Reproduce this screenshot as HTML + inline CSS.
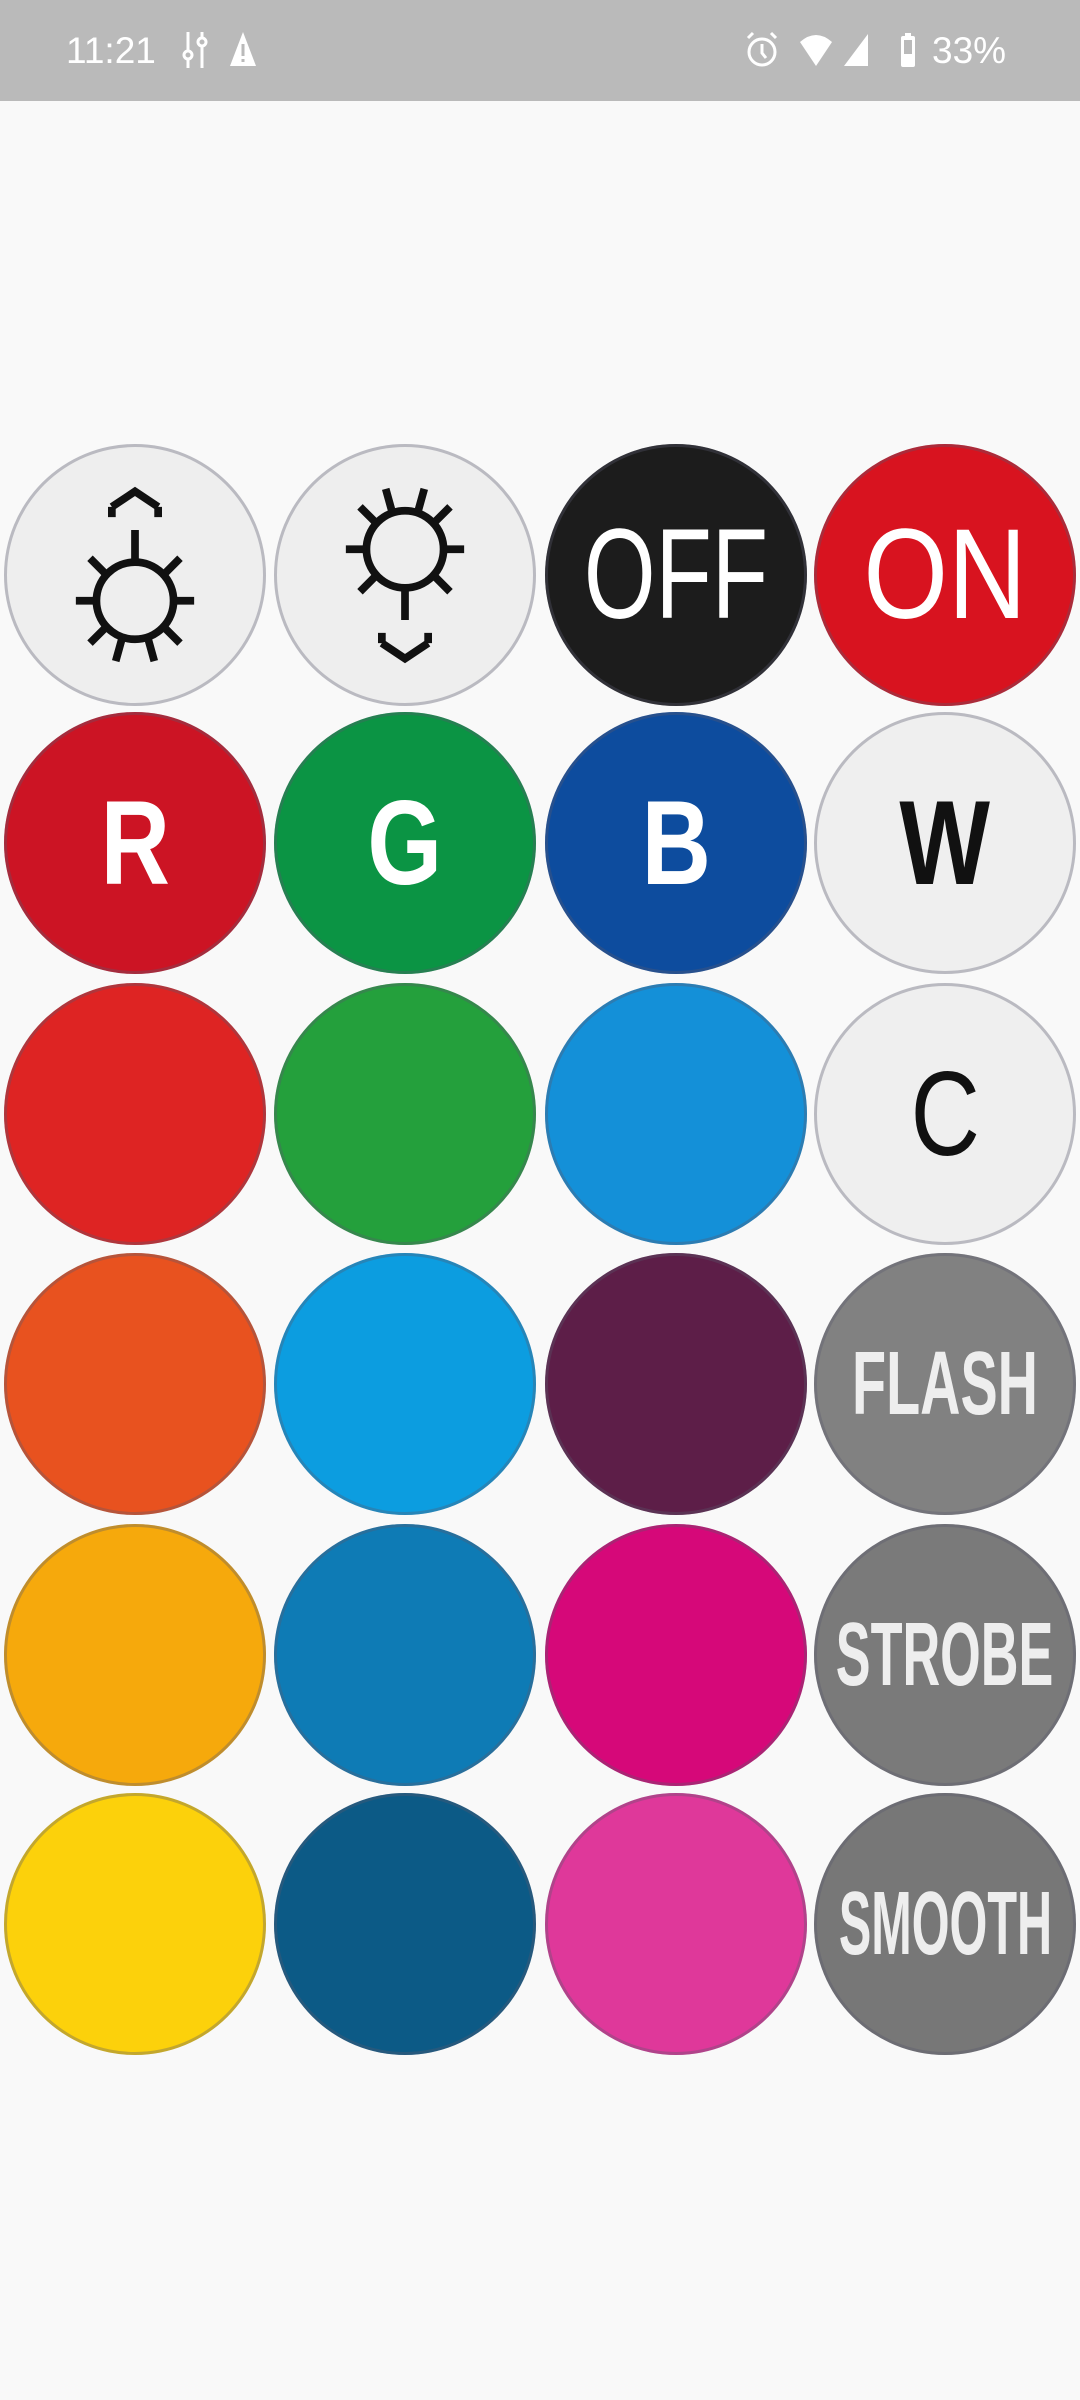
<!DOCTYPE html>
<html><head><meta charset="utf-8"><style>
body{margin:0;width:1080px;height:2400px;background:#f9f9f9;position:relative;overflow:hidden;font-family:"Liberation Sans",sans-serif}
.sb{position:absolute;left:0;top:0;width:1080px;height:101px;background:#bababa;color:#fff}
.c{position:absolute;width:262px;height:262px;border-radius:50%;display:flex;align-items:center;justify-content:center;font-family:"Liberation Sans",sans-serif;box-shadow:inset 0 0 0 3px rgba(90,90,110,.35);box-sizing:border-box}
.c span{font-size:120px;color:#fff;font-weight:bold;display:inline-block;transform:scaleX(.8);line-height:1}
.w span{color:#111}
.g span{font-size:90px;color:#eee;transform:scaleX(.62);white-space:nowrap}
</style></head><body>
<div class="sb">
<div style="position:absolute;left:66px;top:30px;font-size:37px">11:21</div>
<svg style="position:absolute;left:180px;top:30px" width="90" height="42" viewBox="0 0 90 42"><g stroke="#fff" stroke-width="3" fill="none"><line x1="8" y1="2" x2="8" y2="38"/><circle cx="8" cy="25" r="4" fill="#bababa"/><line x1="22" y1="2" x2="22" y2="38"/><circle cx="22" cy="12" r="4" fill="#bababa"/></g><path d="M63 2 L76 36 H50 Z" fill="#fff"/><rect x="61.5" y="14" width="3" height="12" fill="#bababa"/><rect x="61.5" y="29" width="3" height="3" fill="#bababa"/></svg>
<svg style="position:absolute;left:740px;top:30px" width="190" height="42" viewBox="0 0 190 42"><g stroke="#fff" stroke-width="3" fill="none"><circle cx="22" cy="22" r="13"/><path d="M22 14v9l4 5M8 8l5-5M36 8l-5-5"/></g><path d="M60 12 Q76 -2 92 12 L76 36 Z" fill="#fff"/><path d="M128 4 V36 H104 Z" fill="#fff"/><rect x="161" y="6" width="14" height="31" rx="2" fill="#fff"/><rect x="165" y="3" width="6" height="4" fill="#fff"/><rect x="164" y="10" width="8" height="14" fill="#bababa"/></svg>
<div style="position:absolute;left:932px;top:30px;font-size:37px">33%</div>
</div>

<div class="c w" style="left:4px;top:444px;background:#eeeeee"><svg width="180" height="220" viewBox="0 0 140 170"><g stroke="#111" stroke-width="6" fill="none"><circle cx="70" cy="105" r="30"/><path d="M70 75V50M52 32 L70 20 L88 32M52 32v8M88 32v8M40 105H24M100 105h16M47 84l-12-12M93 84l12-12M47 126l-12 12M93 126l12 12M60 134l-5 18M80 134l5 18"/></g></svg></div>
<div class="c w" style="left:274px;top:444px;background:#eeeeee"><svg width="180" height="220" viewBox="0 0 140 170"><g stroke="#111" stroke-width="6" fill="none"><circle cx="70" cy="65" r="30"/><path d="M70 95v25M52 138 L70 150 L88 138M52 138v-8M88 138v-8M40 65H24M100 65h16M47 86l-12 12M93 86l12 12M47 44l-12-12M93 44l12-12M60 36l-5-18M80 36l5-18"/></g></svg></div>
<div class="c" style="left:545px;top:444px;background:#1c1c1c"><span style="font-weight:normal;font-size:128px;transform:scaleX(.72)">OFF</span></div>
<div class="c" style="left:814px;top:444px;background:#d8131f"><span style="font-weight:normal;font-size:128px;transform:scaleX(.85)">ON</span></div>

<div class="c" style="left:4px;top:712px;background:#cc1424"><span>R</span></div>
<div class="c" style="left:274px;top:712px;background:#0b9444"><span>G</span></div>
<div class="c" style="left:545px;top:712px;background:#0d4c9e"><span>B</span></div>
<div class="c w" style="left:814px;top:712px;background:#efefef"><span>W</span></div>

<div class="c" style="left:4px;top:983px;background:#de2423"></div>
<div class="c" style="left:274px;top:983px;background:#24a03c"></div>
<div class="c" style="left:545px;top:983px;background:#1490d8"></div>
<div class="c w" style="left:814px;top:983px;background:#efefef"><span style="font-weight:normal">C</span></div>

<div class="c" style="left:4px;top:1253px;background:#e8521f"></div>
<div class="c" style="left:274px;top:1253px;background:#0c9de0"></div>
<div class="c" style="left:545px;top:1253px;background:#5d1e48"></div>
<div class="c g" style="left:814px;top:1253px;background:#818181"><span>FLASH</span></div>

<div class="c" style="left:4px;top:1524px;background:#f6a90c"></div>
<div class="c" style="left:274px;top:1524px;background:#0e7bb5"></div>
<div class="c" style="left:545px;top:1524px;background:#d60879"></div>
<div class="c g" style="left:814px;top:1524px;background:#7a7a7a"><span style="transform:scaleX(.58)">STROBE</span></div>

<div class="c" style="left:4px;top:1793px;background:#fcd10b"></div>
<div class="c" style="left:274px;top:1793px;background:#0c5a86"></div>
<div class="c" style="left:545px;top:1793px;background:#df389a"></div>
<div class="c g" style="left:814px;top:1793px;background:#777777"><span style="transform:scaleX(.54)">SMOOTH</span></div>
</body></html>
